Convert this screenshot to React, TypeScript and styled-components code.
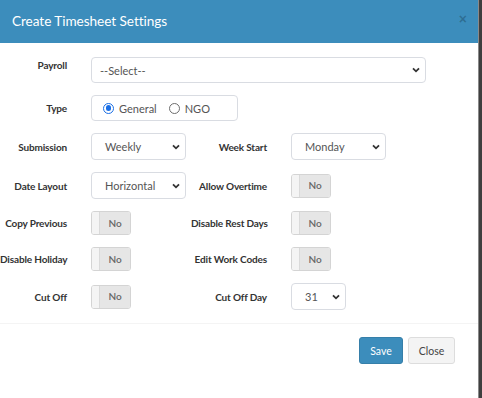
import React from "react";
import styled, { createGlobalStyle } from "styled-components";

const Global = createGlobalStyle`
  html, body { margin: 0; padding: 0; background: #ffffff; }
  body { font-family: "Lato", "Liberation Sans", sans-serif; }
  * { box-sizing: border-box; }
`;

const Page = styled.div`
  display: flex;
  width: 482px;
  height: 398px;
  overflow: hidden;
`;

const Modal = styled.div`
  width: 478px;
  height: 398px;
  background: #ffffff;
  display: flex;
  flex-direction: column;
`;

const Strip = styled.div`
  width: 4px;
  height: 398px;
  background: #3f3f3f;
  border-left: 1px solid #8a8a8a;
`;

const Header = styled.div`
  height: 43px;
  background: #3c8dbc;
  display: flex;
  align-items: center;
  justify-content: space-between;
  padding: 0 12px 2px 12px;
`;

const Title = styled.div`
  color: #ffffff;
  font-size: 13.6px;
  font-weight: 400;
  letter-spacing: -0.05px;
`;

const CloseX = styled.div`
  color: rgba(0, 0, 0, 0.22);
  font-size: 14px;
  font-weight: 700;
  margin-top: -4px;
  margin-right: -1px;
  font-family: "Liberation Sans", sans-serif;
`;

const Body = styled.div`
  padding: 14px 0 0 0;
  display: flex;
  flex-direction: column;
  gap: 12px;
`;

const Row = styled.div`
  display: grid;
  grid-template-columns: 91px 100px 100px 1fr;
  align-items: center;
`;

const Label = styled.div<{ $top?: boolean }>`
  font-size: 10px;
  font-weight: 700;
  color: #333333;
  text-align: right;
  padding-right: 24px;
  white-space: nowrap;
  line-height: 14px;
  letter-spacing: -0.15px;
  ${(p) => (p.$top ? "align-self: start; padding-top: 1px;" : "")}
`;

const Wide = styled.div`
  grid-column: 2 / span 3;
`;

const SelectBox = styled.div<{ $w: number; $h?: number; $pad?: number }>`
  width: ${(p) => p.$w}px;
  height: ${(p) => p.$h ?? 27}px;
  border: 1px solid #d9dce2;
  border-radius: 4px;
  display: flex;
  align-items: center;
  justify-content: space-between;
  padding: 0 5px 0 ${(p) => p.$pad ?? 13}px;
  font-size: 11px;
  color: #555555;
  background: #ffffff;
`;

const TypeBox = styled.div`
  width: 147px;
  height: 26px;
  border: 1px solid #d9dce2;
  border-radius: 4px;
  display: flex;
  align-items: center;
  padding: 0 0 0 11px;
  gap: 12px;
`;

const RadioItem = styled.label`
  display: flex;
  align-items: center;
  gap: 5px;
  font-size: 11px;
  color: #555555;
`;

const RadioDot = styled.span<{ $on?: boolean }>`
  width: 11px;
  height: 11px;
  border-radius: 50%;
  border: ${(p) => (p.$on ? "1.5px solid #1a6fe6" : "1px solid #6d6d6d")};
  display: flex;
  align-items: center;
  justify-content: center;
  background: #fff;
  &::after {
    content: "";
    width: 5.5px;
    height: 5.5px;
    border-radius: 50%;
    background: ${(p) => (p.$on ? "#1a6fe6" : "transparent")};
  }
`;

const Toggle = styled.div`
  width: 40px;
  height: 24px;
  border: 1px solid #d4d4d4;
  border-radius: 3px;
  display: flex;
  overflow: hidden;
`;

const Handle = styled.div`
  width: 8px;
  background: #f4f4f4;
  border-right: 1px solid #dadada;
`;

const OffPart = styled.div`
  flex: 1;
  background: #e6e6e6;
  display: flex;
  align-items: center;
  justify-content: center;
  font-size: 10px;
  font-weight: 600;
  color: #666666;
  padding-bottom: 1px;
`;

const Divider = styled.div`
  height: 1px;
  background: #f4f4f4;
  margin-top: 13px;
`;

const Footer = styled.div`
  display: flex;
  justify-content: flex-end;
  gap: 5px;
  padding: 13px 23px 0 0;
`;

const Button = styled.div<{ $primary?: boolean; $w: number }>`
  width: ${(p) => p.$w}px;
  height: 27px;
  border-radius: 3px;
  display: flex;
  align-items: center;
  justify-content: center;
  font-size: 10.5px;
  background: ${(p) => (p.$primary ? "#3c8dbc" : "#f4f4f4")};
  border: 1px solid ${(p) => (p.$primary ? "#367fa9" : "#dddddd")};
  color: ${(p) => (p.$primary ? "#ffffff" : "#444444")};
`;

const Chevron = () => (
  <svg width="8" height="6" viewBox="0 0 8 6">
    <path d="M1 1.3 L4 4.3 L7 1.3" fill="none" stroke="#333" strokeWidth="1.8" />
  </svg>
);

const Select = ({ text, w, h, pad }: { text: string; w: number; h?: number; pad?: number }) => (
  <SelectBox $w={w} $h={h} $pad={pad}>
    <span>{text}</span>
    <Chevron />
  </SelectBox>
);

const Switch = () => (
  <Toggle>
    <Handle />
    <OffPart>No</OffPart>
  </Toggle>
);

export default function App() {
  return (
    <>
      <Global />
      <Page>
        <Modal>
          <Header>
            <Title>Create Timesheet Settings</Title>
            <CloseX>×</CloseX>
          </Header>
          <Body>
            <Row>
              <Label $top>Payroll</Label>
              <Wide>
                <Select text="--Select--" w={335} h={26} pad={8} />
              </Wide>
            </Row>
            <Row>
              <Label>Type</Label>
              <Wide>
                <TypeBox>
                  <RadioItem>
                    <RadioDot $on />
                    General
                  </RadioItem>
                  <RadioItem>
                    <RadioDot />
                    NGO
                  </RadioItem>
                </TypeBox>
              </Wide>
            </Row>
            <Row>
              <Label>Submission</Label>
              <Select text="Weekly" w={95} />
              <Label>Week Start</Label>
              <Select text="Monday" w={95} />
            </Row>
            <Row>
              <Label>Date Layout</Label>
              <Select text="Horizontal" w={95} />
              <Label>Allow Overtime</Label>
              <Switch />
            </Row>
            <Row>
              <Label>Copy Previous</Label>
              <Switch />
              <Label>Disable Rest Days</Label>
              <Switch />
            </Row>
            <Row>
              <Label>Disable Holiday</Label>
              <Switch />
              <Label>Edit Work Codes</Label>
              <Switch />
            </Row>
            <Row>
              <Label>Cut Off</Label>
              <Switch />
              <Label>Cut Off Day</Label>
              <Select text="31" w={55} />
            </Row>
          </Body>
          <Divider />
          <Footer>
            <Button $primary $w={44}>Save</Button>
            <Button $w={47}>Close</Button>
          </Footer>
        </Modal>
        <Strip />
      </Page>
    </>
  );
}
